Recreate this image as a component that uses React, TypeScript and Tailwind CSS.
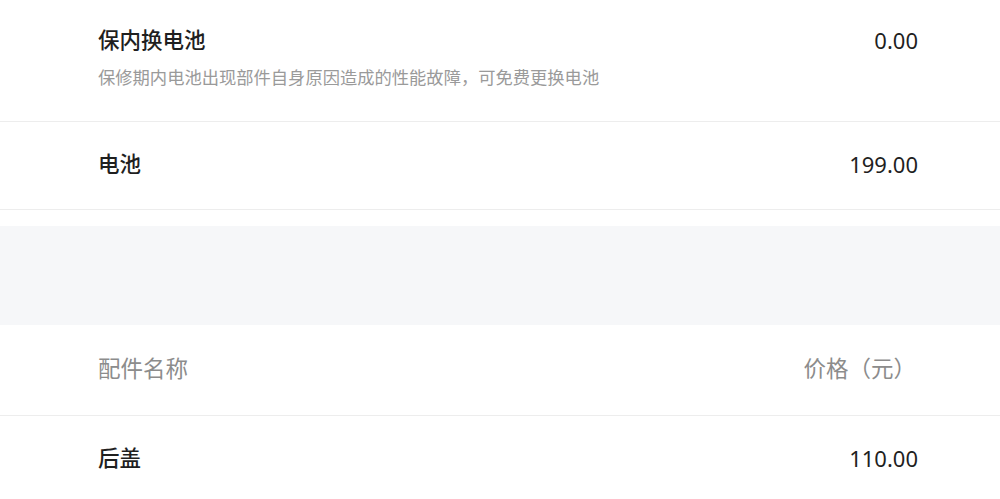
const FONT = "font-['Noto_Sans','Noto_Sans_CJK_SC',sans-serif]";

function PartRow({ name, price, h }: { name: string; price: string; h: string }) {
  return (
    <div className={`flex items-center justify-between border-b border-[#ededed] px-[98px] pr-[82px] pb-[3px] ${h}`}>
      <span className="text-[21.5px] font-medium leading-7 text-[#1f1f1f]">{name}</span>
      <span className="text-[22px] leading-7 text-[#1f1f1f]">{price}</span>
    </div>
  );
}

export default function App() {
  return (
    <div className={`w-[1000px] h-[499px] overflow-hidden bg-white ${FONT}`}>
      {/* warranty replacement */}
      <div className="border-b border-[#ededed] px-[98px] pr-[82px] pt-[26px] h-[122px]">
        <div className="flex items-center justify-between">
          <span className="text-[21.5px] font-medium leading-7 text-[#1f1f1f]">保内换电池</span>
          <span className="text-[22px] leading-7 text-[#1f1f1f]">0.00</span>
        </div>
        <div className="mt-[12px] text-[17.3px] leading-6 text-[#9a9a9a]">
          保修期内电池出现部件自身原因造成的性能故障，可免费更换电池
        </div>
      </div>

      <PartRow name="电池" price="199.00" h="h-[88px]" />

      <div className="h-[16px]" />
      <div className="h-[99px] bg-[#f6f7f9]" />

      {/* parts table header */}
      <div className="flex items-center justify-between border-b border-[#ededed] px-[98px] pr-[84px] pb-[3px] h-[91px]">
        <span className="text-[22.5px] leading-7 text-[#8c8c8c]">配件名称</span>
        <span className="text-[22.5px] leading-7 text-[#8c8c8c]">价格（元）</span>
      </div>

      <PartRow name="后盖" price="110.00" h="h-[88px]" />
    </div>
  );
}
